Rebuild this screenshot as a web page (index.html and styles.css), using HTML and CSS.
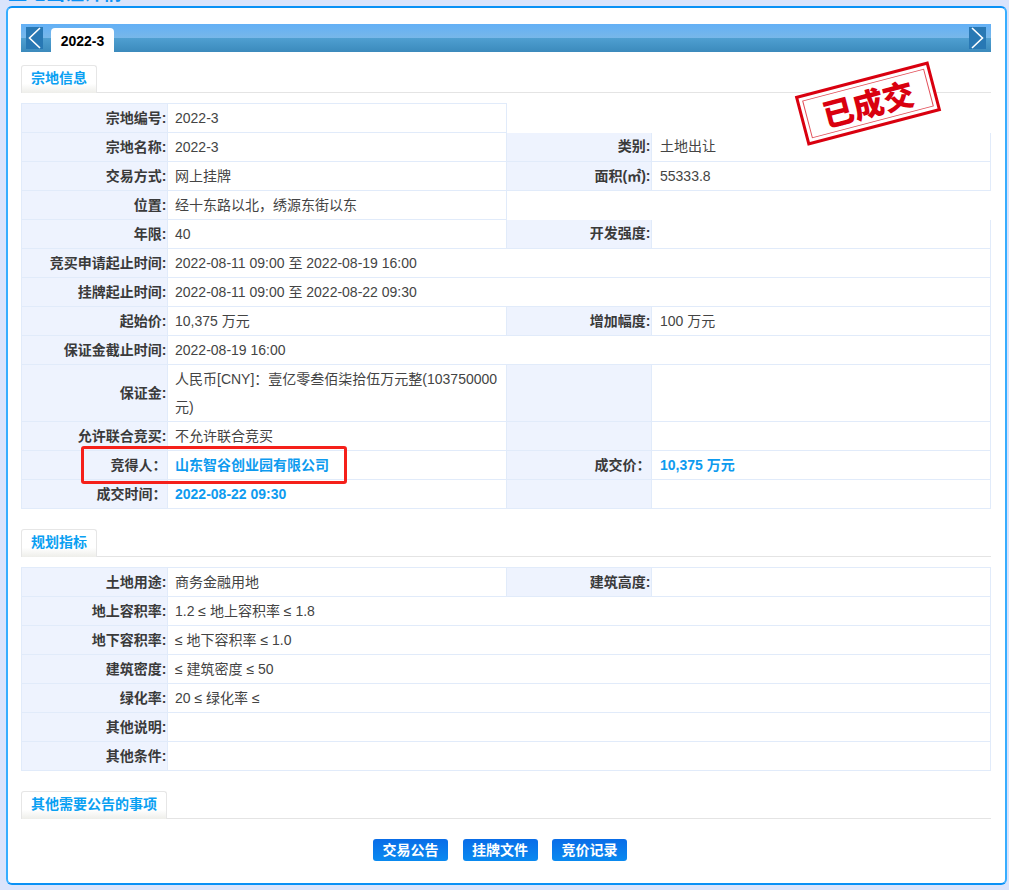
FILE: index.html
```html
<!DOCTYPE html>
<html lang="zh-CN">
<head>
<meta charset="utf-8">
<title>2022-3</title>
<link rel="stylesheet" href="styles.css">
</head>
<body>
<div class="clip-head"><h1>土地出让详情</h1></div>
<main class="panel">
  <div class="tabbar">
    <button class="arrow" aria-label="上一个"><svg viewBox="0 0 17 22" width="17" height="22"><path d="M14 1 3.5 11 14 21" /></svg></button>
    <div class="tab">2022-3</div>
    <button class="arrow arrow-next" aria-label="下一个"><svg viewBox="0 0 17 22" width="17" height="22"><path d="M3 1 13.5 11 3 21" /></svg></button>
  </div>

  <div class="section-head"><h2>宗地信息</h2></div>
  <table class="info">
    <colgroup><col class="c-l1"><col class="c-v1"><col class="c-l2"><col></colgroup>
    <tr><th>宗地编号:</th><td>2022-3</td></tr>
    <tr class="open-top"><th>宗地名称:</th><td>2022-3</td><th>类别:</th><td>土地出让</td></tr>
    <tr><th>交易方式:</th><td>网上挂牌</td><th>面积(㎡):</th><td>55333.8</td></tr>
    <tr><th>位置:</th><td>经十东路以北，绣源东街以东</td></tr>
    <tr class="open-top"><th>年限:</th><td>40</td><th>开发强度:</th><td></td></tr>
    <tr><th>竞买申请起止时间:</th><td colspan="3">2022-08-11 09:00 至 2022-08-19 16:00</td></tr>
    <tr><th>挂牌起止时间:</th><td colspan="3">2022-08-11 09:00 至 2022-08-22 09:30</td></tr>
    <tr><th>起始价:</th><td>10,375 万元</td><th>增加幅度:</th><td>100 万元</td></tr>
    <tr><th>保证金截止时间:</th><td colspan="3">2022-08-19 16:00</td></tr>
    <tr><th>保证金:</th><td>人民币[CNY]：壹亿零叁佰柒拾伍万元整(103750000元)</td><th></th><td></td></tr>
    <tr><th>允许联合竞买:</th><td>不允许联合竞买</td><th></th><td></td></tr>
    <tr><th>竞得人：</th><td class="hl">山东智谷创业园有限公司</td><th>成交价：</th><td class="hl">10,375 万元</td></tr>
    <tr><th>成交时间：</th><td class="hl">2022-08-22 09:30</td><th></th><td></td></tr>
  </table>

  <div class="section-head section-gap"><h2>规划指标</h2></div>
  <table class="info">
    <colgroup><col class="c-l1"><col class="c-v1"><col class="c-l2"><col></colgroup>
    <tr><th>土地用途:</th><td>商务金融用地</td><th>建筑高度:</th><td></td></tr>
    <tr><th>地上容积率:</th><td colspan="3">1.2 ≤ 地上容积率 ≤ 1.8</td></tr>
    <tr><th>地下容积率:</th><td colspan="3">≤ 地下容积率 ≤ 1.0</td></tr>
    <tr><th>建筑密度:</th><td colspan="3">≤ 建筑密度 ≤ 50</td></tr>
    <tr><th>绿化率:</th><td colspan="3">20 ≤ 绿化率 ≤</td></tr>
    <tr><th>其他说明:</th><td colspan="3"></td></tr>
    <tr><th>其他条件:</th><td colspan="3"></td></tr>
  </table>

  <div class="section-head section-gap"><h2>其他需要公告的事项</h2></div>

  <div class="actions">
    <a class="btn" href="#">交易公告</a>
    <a class="btn" href="#">挂牌文件</a>
    <a class="btn" href="#">竞价记录</a>
  </div>

  <div class="stamp"><div class="stamp-inner">已成交</div></div>
  <div class="redbox"></div>
</main>
</body>
</html>
```
FILE: styles.css
```css
* { box-sizing: border-box; }
html, body { margin: 0; padding: 0; }
body {
  background: #dae4fc;
  font-family: "Liberation Sans", "Noto Sans CJK SC", sans-serif;
  font-size: 14px;
  color: #333;
}
.clip-head {
  height: 6px;
  overflow: hidden;
}
.clip-head h1 {
  margin: -20px 0 0 8px;
  font-size: 19px;
  line-height: 28px;
  font-weight: 700;
  color: #0a91f5;
}
.panel {
  position: relative;
  width: 1001px;
  height: 879px;
  margin-left: 6px;
  padding: 16px 14px 0 13px;
  background: #fff;
  border: 2px solid #36adff;
  border-top-color: #0a91f5;
  border-bottom-color: #0a91f5;
  border-radius: 6px;
}
.tabbar {
  display: flex;
  align-items: flex-end;
  height: 28px;
  background: linear-gradient(#63b0f6 0, #78b7e9 50%, #4f9fd1 50%, #3b8abc 100%);
}
.arrow {
  display: block;
  width: 17px;
  height: 22px;
  margin: 0 0 3px 5px;
  padding: 0;
  border: 0;
  background: #2878b4;
}
.arrow svg { display: block; }
.arrow path { fill: none; stroke: #fff; stroke-width: 1.6; }
.arrow-next { margin: 0 5px 3px auto; }
.tab {
  width: 63px;
  height: 24px;
  margin-left: 8px;
  background: #fff;
  border-radius: 4px 4px 0 0;
  color: #000;
  font-weight: 700;
  line-height: 27px;
  text-align: center;
}
.section-head {
  margin-top: 13px;
  height: 28px;
  border-bottom: 1px solid #e4e4e4;
}
.section-gap { margin-top: 20px; }
.section-head h2 {
  display: inline-block;
  height: 28px;
  margin: 0;
  padding: 0 9px;
  border: 1px solid #e6e6e6;
  border-bottom: 0;
  border-radius: 3px 3px 0 0;
  background: linear-gradient(#fff 0, #fff 65%, #eeeeea 100%);
  color: #0aa0f2;
  font-size: 14px;
  font-weight: 700;
  line-height: 25px;
}
.info {
  width: 970px;
  margin-top: 10px;
  border-collapse: collapse;
  table-layout: fixed;
}
.c-l1 { width: 146px; }
.c-v1 { width: 339px; }
.c-l2 { width: 145px; }
.info th, .info td {
  height: 29px;
  padding: 0;
  border: 1px solid #e1ebfa;
  line-height: 28px;
  font-size: 14px;
}
.info th {
  padding-right: 0.5px;
  background: #eef3fe;
  color: #3a3a3a;
  font-weight: 700;
  text-align: right;
}
.info td { padding-left: 8px; padding-right: 6px; color: #444; }
.info td:nth-child(2) { padding-left: 7px; }
.info td.hl { color: #0e9bef; font-weight: 700; }
.open-top th:nth-child(3), .open-top td:nth-child(4) { border-top: 0; line-height: 26px; padding-bottom: 2px; }
.actions {
  display: flex;
  justify-content: center;
  gap: 14.5px;
  margin-top: 20px;
  padding-right: 12px;
}
.btn {
  display: block;
  width: 75px;
  height: 22px;
  border-radius: 3px;
  background: linear-gradient(#0a6de8, #0a8af0);
  color: #fff;
  font-weight: 700;
  line-height: 22px;
  text-align: center;
  text-decoration: none;
}
.stamp {
  position: absolute;
  left: 791px;
  top: 70px;
  width: 138px;
  height: 51px;
  padding: 3px;
  border: 3px solid #d9000f;
  background: #fff;
  transform: rotate(-14.7deg);
}
.stamp-inner {
  height: 39px;
  border: 1px solid #e2505a;
  color: #d9000f;
  font-family: "Noto Sans CJK SC", sans-serif;
  font-size: 31px;
  font-weight: 900;
  line-height: 36px;
  text-align: center;
}
.redbox {
  position: absolute;
  left: 73px;
  top: 438px;
  width: 266px;
  height: 38px;
  border: 3px solid #f5201a;
  border-radius: 3px;
}
```
